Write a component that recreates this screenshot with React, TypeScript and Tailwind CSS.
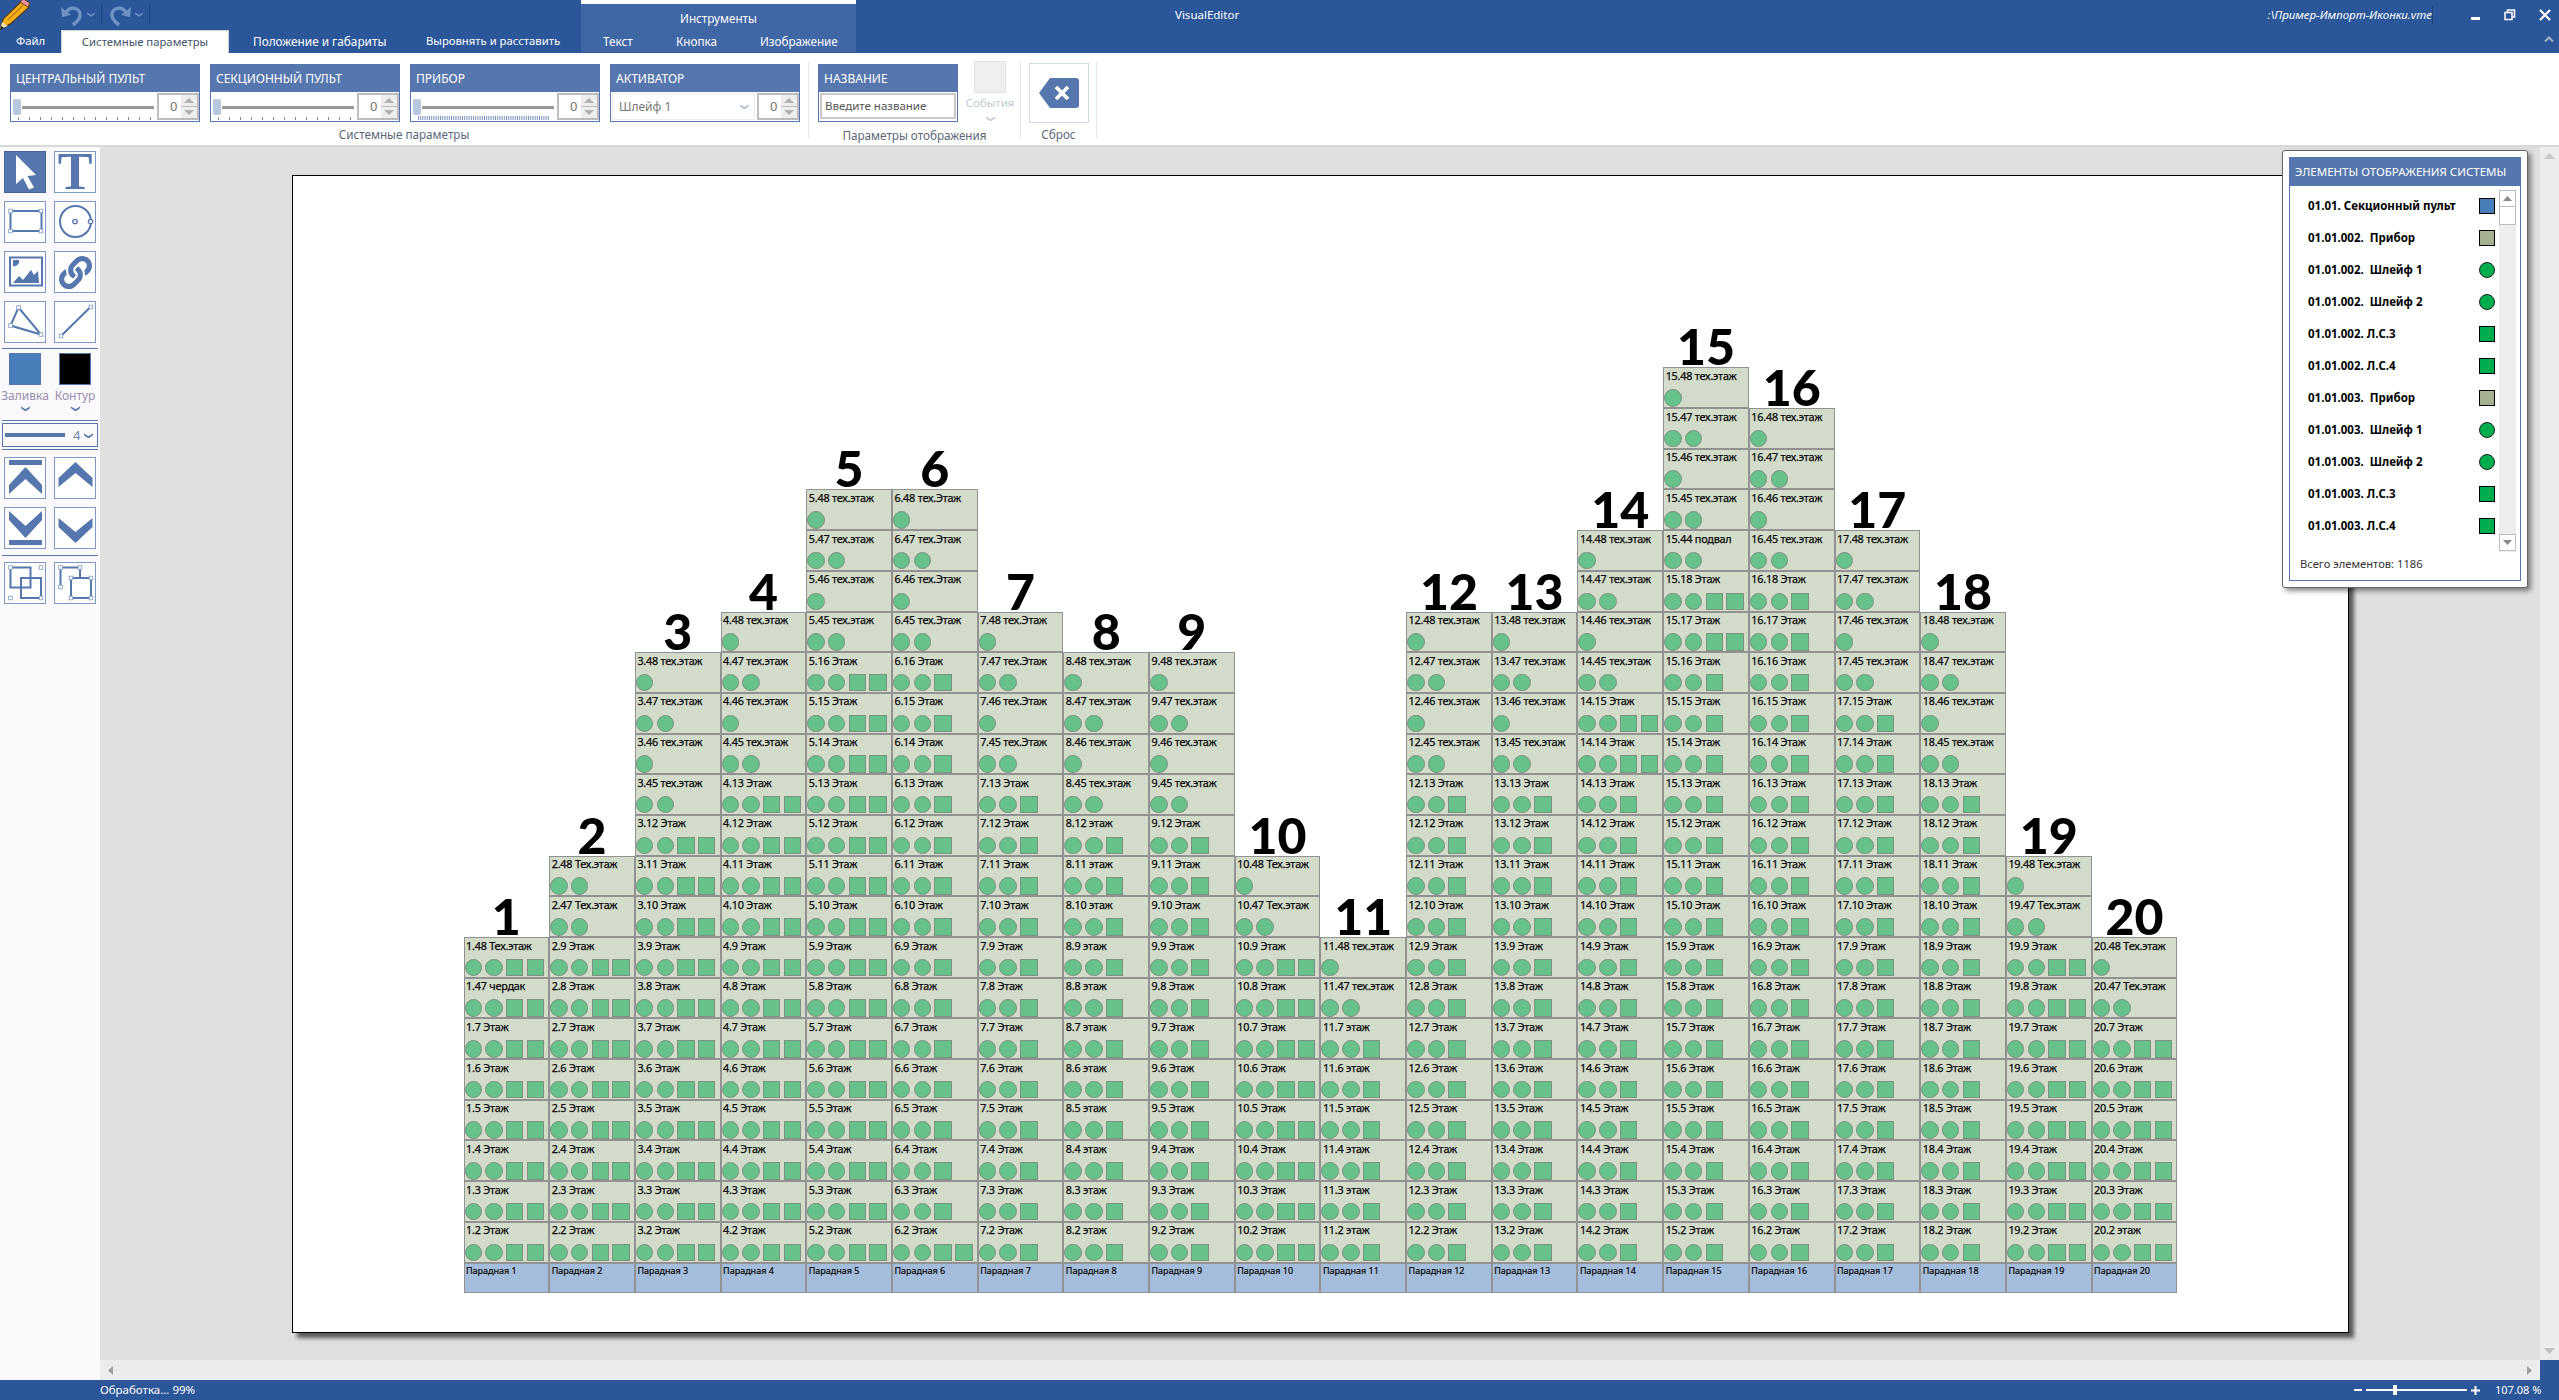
import React from "react";
import { FaLink } from "react-icons/fa";

const BLUE = "#5577ae";

type Row = [string, number];
const seq = (c: number, from: number, to: number, word: string, n: number): Row[] => {
  const out: Row[] = [];
  for (let i = from; i >= to; i--) out.push([`${c}.${i} ${word}`, n]);
  return out;
};
const tech = (c: number, word: string): Row[] => [
  [`${c}.48 ${word}`, 1],
  [`${c}.47 ${word}`, 2],
  [`${c}.46 ${word}`, 1],
  [`${c}.45 ${word}`, 2],
];
const two = (c: number, a: number, b: number): Row[] => [
  [`${c}.48 Тех.этаж`, a],
  [`${c}.47 Тех.этаж`, b],
];

const columns: Row[][] = [
  [["1.48 Тех.этаж", 4], ["1.47 чердак", 4], ...seq(1, 7, 2, "Этаж", 4)],
  [...two(2, 2, 2), ...seq(2, 9, 2, "Этаж", 4)],
  [...tech(3, "тех.этаж"), ...seq(3, 12, 2, "Этаж", 4)],
  [...tech(4, "тех.этаж"), ...seq(4, 13, 2, "Этаж", 4)],
  [...tech(5, "тех.этаж"), ...seq(5, 16, 2, "Этаж", 4)],
  [...tech(6, "тех.Этаж"), ...seq(6, 16, 3, "Этаж", 3), ["6.2 Этаж", 4]],
  [...tech(7, "тех.Этаж"), ...seq(7, 13, 2, "Этаж", 3)],
  [...tech(8, "тех.этаж"), ...seq(8, 12, 2, "этаж", 3)],
  [...tech(9, "тех.этаж"), ...seq(9, 12, 2, "Этаж", 3)],
  [...two(10, 1, 2), ...seq(10, 9, 2, "Этаж", 4)],
  [["11.48 тех.этаж", 1], ["11.47 тех.этаж", 2], ...seq(11, 7, 2, "этаж", 3)],
  [...tech(12, "тех.этаж"), ...seq(12, 13, 2, "Этаж", 3)],
  [...tech(13, "тех.этаж"), ...seq(13, 13, 2, "Этаж", 3)],
  [...tech(14, "тех.этаж"), ...seq(14, 15, 14, "Этаж", 4), ...seq(14, 13, 2, "Этаж", 3)],
  [...tech(15, "тех.этаж"), ["15.44 подвал", 2], ...seq(15, 18, 17, "Этаж", 4), ...seq(15, 16, 2, "Этаж", 3)],
  [...tech(16, "тех.этаж"), ...seq(16, 18, 2, "Этаж", 3)],
  [...tech(17, "тех.этаж"), ...seq(17, 15, 2, "Этаж", 3)],
  [...tech(18, "тех.этаж"), ...seq(18, 13, 2, "Этаж", 3)],
  [...two(19, 1, 2), ...seq(19, 9, 2, "Этаж", 4)],
  [...two(20, 1, 2), ...seq(20, 7, 3, "Этаж", 4), ["20.2 этаж", 4]],
];

const legend: [string, string][] = [
  ["01.01. Секционный пульт", "blue"],
  ["01.01.002.  Прибор", "olive"],
  ["01.01.002.  Шлейф 1", "circle"],
  ["01.01.002.  Шлейф 2", "circle"],
  ["01.01.002. Л.С.3", "square"],
  ["01.01.002. Л.С.4", "square"],
  ["01.01.003.  Прибор", "olive"],
  ["01.01.003.  Шлейф 1", "circle"],
  ["01.01.003.  Шлейф 2", "circle"],
  ["01.01.003. Л.С.3", "square"],
  ["01.01.003. Л.С.4", "square"],
];

function Cell({ label, n }: { label: string; n: number }) {
  return (
    <div className="h-[40.7px] w-[85.7px] border border-[#929292] bg-[#d3dbca] flex flex-col justify-between overflow-hidden">
      <div className="pl-[1.5px] pt-[0.5px] text-[10.8px] leading-[13px] text-black whitespace-nowrap tracking-[-0.2px] [-webkit-text-stroke:0.25px_#111]">{label}</div>
      <div className="flex gap-[3.2px] pb-[0.5px] h-[18px]">
        {[0, 1, 2, 3].slice(0, n).map((i) =>
          i < 2 ? (
            <div key={i} className="w-[17.5px] h-[17.5px] shrink-0 rounded-full bg-[#66c28a] border-[1.5px] border-[#7f9180]" />
          ) : (
            <div key={i} className="w-[17.5px] h-[17.5px] shrink-0 bg-[#66c28a] border-[1.5px] border-[#7f9180]" />
          )
        )}
      </div>
    </div>
  );
}

function Column({ num, rows }: { num: number; rows: Row[] }) {
  return (
    <div className="flex flex-col items-center w-[85.7px]">
      <div className="h-[38px] text-[50px] leading-[35px] font-black text-black whitespace-nowrap" style={{ fontFamily: "Lato, sans-serif" }}>
        {num}
      </div>
      {rows.map(([l, n]) => (
        <Cell key={l} label={l} n={n} />
      ))}
      <div className="h-[30px] w-[85.7px] border border-[#929292] bg-[#a5bddc] pl-[1.5px] pt-[1px] text-[9px] leading-[12px] text-black whitespace-nowrap overflow-hidden [-webkit-text-stroke:0.2px_#111]">
        Парадная {num}
      </div>
    </div>
  );
}

function Ticks({ dense }: { dense?: boolean }) {
  const xs: number[] = [];
  if (dense) for (let x = 0; x <= 131; x += 2.2) xs.push(x);
  else for (let x = 0; x <= 132; x += 11) xs.push(x);
  return (
    <svg width="134" height="5" className="block">
      {xs.map((x) => (
        <line key={x} x1={x + 0.5} x2={x + 0.5} y1={dense ? 0 : 1} y2={4} stroke={dense ? "#5577ae" : "#6f7f99"} strokeWidth="1" opacity={dense ? 0.8 : 0.9} />
      ))}
    </svg>
  );
}

function Spin() {
  return (
    <div className="w-[42px] h-[27px] flex border-2 border-[#bdbdbd] bg-white shrink-0">
      <div className="flex-1 text-right pr-[3px] text-[13px] leading-[23px] text-[#777]">0</div>
      <div className="w-[16px] flex flex-col bg-[#ededed]">
        <div className="flex-1 flex items-center justify-center border-b border-[#bdbdbd]">
          <svg width="10" height="5"><path d="M0 5 L5 0 L10 5Z" fill="#b0b0b0" /></svg>
        </div>
        <div className="flex-1 flex items-center justify-center">
          <svg width="10" height="5"><path d="M0 0 L5 5 L10 0Z" fill="#b0b0b0" /></svg>
        </div>
      </div>
    </div>
  );
}

function PanelTitle({ children }: { children: React.ReactNode }) {
  return <div className="h-[28px] bg-[#5577ae] text-white text-[12px] leading-[29px] pl-[6px] whitespace-nowrap">{children}</div>;
}

function Panel({ title, dense }: { title: string; dense?: boolean }) {
  return (
    <div className="w-[190px] h-[58px] flex flex-col">
      <PanelTitle>{title}</PanelTitle>
      <div className="flex-1 border-x-[1.5px] border-b-[1.5px] border-[#5577ae] flex items-start pr-[0.5px] pl-[2px] bg-white">
        <div className="flex-1 flex flex-col">
          <div className="flex items-center h-[16px] mt-[7px]">
            <div className="w-[7.5px] h-[16px] rounded-[2px] bg-[#b8c8de]" />
            <div className="w-[132px] h-[3px] bg-[#9a9a9a] ml-[1px]" />
          </div>
          <div className="pl-[5px] mt-[1px]"><Ticks dense={dense} /></div>
        </div>
        <div className="mt-[1px]"><Spin /></div>
      </div>
    </div>
  );
}

function Btn({ children, active }: { children: React.ReactNode; active?: boolean }) {
  return (
    <div className={`w-[42px] h-[42px] flex items-center justify-center border ${active ? "border-[#44659c] bg-[#5577ae]" : "border-[#7d9ac6] bg-white"}`}>
      {children}
    </div>
  );
}

function Handle({ x, y }: { x: number; y: number }) {
  return <rect x={x - 1.8} y={y - 1.8} width="3.6" height="3.6" fill="#fff" stroke="#7d9ac6" strokeWidth="0.8" />;
}

const ToolRow = ({ children, mt = "mt-[8px]" }: { children: React.ReactNode; mt?: string }) => (
  <div className={`flex gap-[8px] pl-[4px] ${mt}`}>{children}</div>
);

const Divider = ({ mt }: { mt: string }) => <div className={`h-[1px] bg-[#5577ae] mx-[2px] ${mt}`} />;

const Chev = ({ color = "#5577ae", w = 9 }: { color?: string; w?: number }) => (
  <svg width={w} height={w * 0.6} viewBox="0 0 10 6"><path d="M0 0.5 L5 3.5 L10 0.5 L10 2.5 L5 6 L0 2.5Z" fill={color} /></svg>
);

function Toolbar() {
  return (
    <div className="w-[100px] shrink-0 bg-[#fbf9fc] flex flex-col">
      <ToolRow mt="mt-[4px]">
        <Btn active>
          <svg width="42" height="42"><path d="M11 4 L31 24 L22.5 25 L29 36.5 L24 38.5 L18 27 L11 33Z" fill="#fff" /></svg>
        </Btn>
        <Btn>
          <span className="text-[52px] leading-[42px] font-bold text-[#5577ae]" style={{ fontFamily: "'Liberation Serif', serif" }}>T</span>
        </Btn>
      </ToolRow>
      <ToolRow>
        <Btn>
          <svg width="42" height="42">
            <rect x="5.5" y="10" width="31" height="20" fill="none" stroke={BLUE} strokeWidth="2" />
            <Handle x={5.5} y={10} /><Handle x={36} y={10} /><Handle x={5.5} y={30} /><Handle x={36} y={30} />
          </svg>
        </Btn>
        <Btn>
          <svg width="42" height="42">
            <circle cx="20.5" cy="20.5" r="15.5" fill="none" stroke={BLUE} strokeWidth="2" />
            <circle cx="20" cy="20.5" r="2.2" fill="#fff" stroke={BLUE} strokeWidth="1.3" />
            <circle cx="35.5" cy="20.5" r="2.2" fill="#fff" stroke={BLUE} strokeWidth="1.2" />
          </svg>
        </Btn>
      </ToolRow>
      <ToolRow>
        <Btn>
          <svg width="42" height="42">
            <rect x="5" y="6.5" width="32" height="28" fill="none" stroke={BLUE} strokeWidth="2" />
            <path d="M8 9 L14 9 A5 5 0 0 1 8 15Z" fill={BLUE} />
            <path d="M8 32 L14 25 L18 29 L26 19 L29 24 L33 20 L34 32Z" fill={BLUE} />
          </svg>
        </Btn>
        <Btn><FaLink size={33} color={BLUE} /></Btn>
      </ToolRow>
      <ToolRow>
        <Btn>
          <svg width="42" height="42">
            <path d="M13.5 6.5 L36 33.5 L5.5 24.5Z" fill="none" stroke={BLUE} strokeWidth="2" />
            <Handle x={13.5} y={6.5} /><Handle x={36} y={33.5} /><Handle x={5.5} y={24.5} />
          </svg>
        </Btn>
        <Btn>
          <svg width="42" height="42">
            <line x1="6" y1="35" x2="35.5" y2="6" stroke={BLUE} strokeWidth="2" />
            <Handle x={6} y={35} /><Handle x={36} y={6} />
          </svg>
        </Btn>
      </ToolRow>
      <Divider mt="mt-[5px]" />
      <div className="flex mt-[4px] text-center">
        {[["Заливка", "bg-[#4a7ebb]"], ["Контур", "bg-black"]].map(([t, c]) => (
          <div key={t} className="w-[50px] flex flex-col items-center text-[12px] leading-[16px] text-[#9a8fb0]">
            <div className={`w-[32px] h-[32px] ${c} border-[1.5px] border-[#5577ae]`} />
            <div className="mt-[3px]">{t}</div>
            <div className="mt-[2px]"><Chev /></div>
          </div>
        ))}
      </div>
      <Divider mt="mt-[9px]" />
      <div className="mx-[2px] mt-[2px] h-[24px] border border-[#5577ae] flex items-center pl-[2px]">
        <div className="w-[60px] h-[4px] bg-[#5577ae]" />
        <div className="ml-[8px] text-[13px] text-[#6f85ad] leading-[20px]">4</div>
        <div className="ml-[4px]"><Chev /></div>
      </div>
      <Divider mt="mt-[2px]" />
      <ToolRow mt="mt-[7px]">
        <Btn><svg width="42" height="42"><rect x="4" y="3" width="33" height="5" fill={BLUE} /><path d="M4 28 L20.5 10 L37 28 L37 37 L20.5 22 L4 37Z" fill={BLUE} /></svg></Btn>
        <Btn><svg width="42" height="42"><path d="M3.5 21 L20.5 5 L37.5 21 L37.5 30 L20.5 16 L3.5 30Z" fill={BLUE} /></svg></Btn>
      </ToolRow>
      <ToolRow>
        <Btn><svg width="42" height="42"><rect x="4" y="33" width="33" height="5" fill={BLUE} /><path d="M4 4 L20.5 19 L37 4 L37 13 L20.5 31 L4 13Z" fill={BLUE} /></svg></Btn>
        <Btn><svg width="42" height="42"><path d="M3.5 11 L20.5 25 L37.5 11 L37.5 20 L20.5 36 L3.5 20Z" fill={BLUE} /></svg></Btn>
      </ToolRow>
      <Divider mt="mt-[6px]" />
      <ToolRow mt="mt-[6px]">
        <Btn>
          <svg width="42" height="42">
            <rect x="5.5" y="5.5" width="20" height="20" fill="none" stroke={BLUE} strokeWidth="2" />
            <rect x="16" y="16" width="20" height="20" fill="none" stroke={BLUE} strokeWidth="2" />
            <Handle x={5.5} y={5.5} /><Handle x={36} y={5.5} /><Handle x={5.5} y={36} /><Handle x={36} y={36} />
          </svg>
        </Btn>
        <Btn>
          <svg width="42" height="42">
            <path d="M5.5 25 L5.5 5.5 L25 5.5 L25 16" fill="none" stroke={BLUE} strokeWidth="2" />
            <rect x="16" y="16" width="20" height="20" fill="#fff" stroke={BLUE} strokeWidth="2" />
            <Handle x={5.5} y={5.5} /><Handle x={25} y={5.5} /><Handle x={5.5} y={25} /><Handle x={16} y={16} /><Handle x={36} y={16} /><Handle x={16} y={36} /><Handle x={36} y={36} />
          </svg>
        </Btn>
      </ToolRow>
    </div>
  );
}

function LegendIcon({ kind }: { kind: string }) {
  if (kind === "circle") return <div className="w-[16px] h-[16px] rounded-full bg-[#00ad4e] border border-[#222]" />;
  const bg = kind === "blue" ? "bg-[#4a7ebb]" : kind === "olive" ? "bg-[#a5b191]" : "bg-[#00ad4e]";
  return <div className={`w-[16px] h-[16px] ${bg} border border-black`} />;
}

function LegendPanel() {
  return (
    <div className="absolute top-[3px] right-[31px] w-[246px] h-[438px] bg-white border border-[#666] rounded-[3px] p-[6px] shadow-[3px_3px_5px_rgba(0,0,0,0.45)]">
      <div className="h-full border border-[#5577ae] flex flex-col">
        <div className="h-[28px] shrink-0 bg-[#5577ae] text-white text-[11.5px] leading-[28px] pl-[5px] whitespace-nowrap">ЭЛЕМЕНТЫ ОТОБРАЖЕНИЯ СИСТЕМЫ</div>
        <div className="flex pt-[4px] h-[366px] shrink-0">
          <div className="w-[209px] pl-[18px] pr-[4px] flex flex-col">
            {legend.map(([t, k], i) => (
              <div key={i} className="h-[32px] flex items-center justify-between shrink-0">
                <span className="text-[11.5px] font-bold text-black whitespace-pre">{t}</span>
                <LegendIcon kind={k} />
              </div>
            ))}
          </div>
          <div className="w-[17px] bg-[#ededed] flex flex-col justify-between">
            <div className="flex flex-col">
              <div className="h-[17px] bg-white border-[1.5px] border-[#bdbdbd] flex items-center justify-center">
                <svg width="9" height="5"><path d="M0 5 L4.5 0 L9 5Z" fill="#888" /></svg>
              </div>
              <div className="h-[18px] bg-white border-x-[1.5px] border-b-[1.5px] border-[#bdbdbd]" />
            </div>
            <div className="h-[17px] bg-white border-[1.5px] border-[#bdbdbd] flex items-center justify-center mb-[1px]">
              <svg width="9" height="5"><path d="M0 0 L4.5 5 L9 0Z" fill="#888" /></svg>
            </div>
          </div>
        </div>
        <div className="flex-1 flex items-center pl-[10px] pb-[4px] text-[11.2px] text-[#333]">Всего элементов: 1186</div>
      </div>
    </div>
  );
}

function Header() {
  return (
    <div className="h-[53px] bg-[#2b579a] flex text-white shrink-0">
      <div className="w-[581px] flex flex-col shrink-0">
        <div className="h-[30px] flex items-center">
          <svg width="30" height="30" viewBox="0 0 27 30" preserveAspectRatio="none" className="shrink-0">
            <path d="M0 29 L3 19 L19 2 L26 7 L9 24Z" fill="#f6b21b" stroke="#5c3a08" strokeWidth="1" />
            <path d="M18 2 L21 -1 L27 3 L25 7Z" fill="#ef8fa5" stroke="#5c3a08" strokeWidth="0.8" />
            <path d="M0 29 L2 22 L7 26Z" fill="#f4dcb0" />
            <path d="M0 30 L1 26 L3.5 28Z" fill="#222" />
            <line x1="7" y1="20" x2="21" y2="5" stroke="#c97f0a" strokeWidth="1.5" />
          </svg>
          <div className="flex items-center ml-[30px] mt-[-1px]">
            <svg width="24" height="22" viewBox="0 0 24 22" fill="none"><path d="M6 9 C9 2 20 3 20 11 C20 15 17 18 13 21" stroke="#6f92c5" strokeWidth="3.5" /><path d="M1 3 L2 13 L11 11Z" fill="#6f92c5" /></svg>
            <div className="ml-[3px] mr-[6px]"><Chev color="#6f92c5" w={8} /></div>
            <div className="w-[1px] h-[20px] bg-[#1d4279]" />
            <svg width="24" height="22" viewBox="0 0 24 22" fill="none" className="ml-[6px]"><path d="M18 9 C15 2 4 3 4 11 C4 15 7 18 11 21" stroke="#6f92c5" strokeWidth="3.5" /><path d="M23 3 L22 13 L13 11Z" fill="#6f92c5" /></svg>
            <div className="ml-[3px] mr-[6px]"><Chev color="#6f92c5" w={8} /></div>
            <div className="w-[1px] h-[20px] bg-[#1d4279]" />
          </div>
        </div>
        <div className="h-[23px] flex items-center text-[11.3px]">
          <span className="ml-[16px] w-[45px]">Файл</span>
          <span className="w-[168px] h-[23px] bg-white border-t border-x border-[#d0d0d0] text-[#44546a] text-center leading-[22px] whitespace-nowrap">Системные параметры</span>
          <span className="ml-[24px] w-[173px] whitespace-nowrap text-[11.8px]">Положение и габариты</span>
          <span className="whitespace-nowrap">Выровнять и расставить</span>
        </div>
      </div>
      <div className="w-[275px] shrink-0 flex flex-col">
        <div className="h-[4px] bg-white" />
        <div className="h-[26px] bg-[#3f66a5] text-center text-[11.7px] leading-[28px]">Инструменты</div>
        <div className="h-[22px] bg-[#3f66a5] flex text-[11.7px] leading-[22px] pl-[22px]">
          <span className="w-[73px]">Текст</span>
          <span className="w-[84px]">Кнопка</span>
          <span>Изображение</span>
        </div>
      </div>
      <div className="flex-1 flex flex-col">
        <div className="h-[30px] flex items-center text-[11.5px]">
          <span className="ml-[319px] w-[64px] whitespace-nowrap">VisualEditor</span>
          <span className="ml-[1024px] w-[170px] italic whitespace-nowrap border-r border-[#1d4279] text-right">:\Пример-Импорт-Иконки.vme</span>
          <div className="ml-[38px] w-[9px] h-[3px] mt-[6px] bg-white" />
          <svg width="12" height="12" className="ml-[24px]" fill="none" stroke="#fff" strokeWidth="1.5"><rect x="1" y="3.5" width="7" height="7" /><path d="M3.5 3 V1 H10.5 V8 H8.5" /></svg>
          <svg width="12" height="12" className="ml-[23px]" stroke="#fff" strokeWidth="2.2"><path d="M1 1 L11 11 M11 1 L1 11" /></svg>
        </div>
        <div className="flex-1 flex justify-end pr-[5px] pt-[6px]">
          <svg width="10" height="6"><path d="M0 5 L5 0 L10 5 L8 6 L5 3 L2 6Z" fill="#9fb0c9" /></svg>
        </div>
      </div>
    </div>
  );
}

const GroupLabel = ({ children }: { children: React.ReactNode }) => (
  <div className="text-[11.7px] leading-[16px] text-[#5b6678] text-center whitespace-nowrap mt-auto">{children}</div>
);
const RibbonSep = () => <div className="w-[1px] h-[76px] mt-[9px] bg-[#e4e4e4] shrink-0" />;

function Ribbon() {
  return (
    <div className="h-[94px] bg-white border-b-2 border-[#d8d8d8] flex shrink-0 text-[#333]">
      <div className="w-[808px] shrink-0 flex flex-col h-[89px]">
        <div className="flex gap-[10px] pl-[10px] pt-[11px]">
          <Panel title="ЦЕНТРАЛЬНЫЙ ПУЛЬТ" />
          <Panel title="СЕКЦИОННЫЙ ПУЛЬТ" />
          <Panel title="ПРИБОР" dense />
          <div className="w-[190px] h-[58px] flex flex-col">
            <PanelTitle>АКТИВАТОР</PanelTitle>
            <div className="flex-1 border-x-[1.5px] border-b-[1.5px] border-[#5577ae] flex items-start pl-[1px] pr-[0.5px] gap-[2px] pt-[1px]">
              <div className="flex-1 h-[27px] border border-[#ececec] flex items-center justify-between pl-[6px] pr-[5px] text-[12px] text-[#777]">
                <span>Шлейф 1</span>
                <Chev color="#a9b8d0" />
              </div>
              <Spin />
            </div>
          </div>
        </div>
        <GroupLabel>Системные параметры</GroupLabel>
      </div>
      <RibbonSep />
      <div className="w-[211px] shrink-0 flex flex-col h-[89px]">
        <div className="flex pl-[9px] pt-[8px]">
          <div className="w-[140px] mt-[3px] h-[58px] flex flex-col">
            <PanelTitle>НАЗВАНИЕ</PanelTitle>
            <div className="flex-1 border-x-[1.5px] border-b-[1.5px] border-[#5577ae] p-[1px]">
              <div className="h-[26px] border-2 border-[#c9c9c9] pl-[3px] text-[11.5px] leading-[22px] text-[#555] whitespace-nowrap">Введите название</div>
            </div>
          </div>
          <div className="ml-[16px] w-[32px] h-[66px] flex flex-col items-center">
            <div className="w-[32px] h-[32px] shrink-0 bg-[#efefef] border border-[#e2e2e2]" />
            <div className="mt-[1px] text-[11.5px] leading-[18px] text-[#c3cad6]">События</div>
            <div className="mt-[4px]"><Chev color="#c0cad9" /></div>
          </div>
        </div>
        <GroupLabel>Параметры отображения</GroupLabel>
      </div>
      <RibbonSep />
      <div className="w-[75px] shrink-0 flex flex-col items-center h-[89px]">
        <div className="mt-[10px] w-[60px] h-[60px] border border-[#cfd9e8] flex items-center justify-center">
          <svg width="40" height="30" viewBox="0 0 40 30">
            <path d="M11 0 H37 Q40 0 40 3 V27 Q40 30 37 30 H11 L0 15Z" fill={BLUE} />
            <path d="M17 9 L29 21 M29 9 L17 21" stroke="#fff" strokeWidth="3.8" />
          </svg>
        </div>
        <GroupLabel>Сброс</GroupLabel>
      </div>
      <RibbonSep />
    </div>
  );
}

export default function App() {
  return (
    <div className="w-[2559px] h-[1400px] overflow-hidden flex flex-col bg-white" style={{ fontFamily: "'Noto Sans', sans-serif" }}>
      <Header />
      <Ribbon />
      <div className="flex-1 flex min-h-0">
        <Toolbar />
        <div className="flex-1 flex flex-col min-w-0">
          <div className="flex-1 flex min-h-0 relative">
            <div className="flex-1 bg-[#dfdfdf] pl-[192px] pt-[28px] min-w-0">
              <div className="w-[2057px] h-[1158px] bg-white border-[1.5px] border-black shadow-[5px_5px_4px_rgba(0,0,0,0.6)] flex items-end pl-[170.5px] pb-[39.5px]">
                {columns.map((rows, i) => (
                  <Column key={i} num={i + 1} rows={rows} />
                ))}
              </div>
            </div>
            <div className="w-[19px] bg-[#ececec] flex flex-col justify-between items-center py-[6px]">
              <svg width="11" height="6"><path d="M0 6 L5.5 0 L11 6Z" fill="#c8c8c8" /></svg>
              <svg width="11" height="6"><path d="M0 0 L5.5 6 L11 0Z" fill="#c0c0c0" /></svg>
            </div>
            <LegendPanel />
          </div>
          <div className="h-[20px] flex shrink-0">
            <div className="flex-1 bg-[#ececec] flex justify-between items-center pl-[8px] pr-[8px]">
              <svg width="5" height="9"><path d="M5 0 L0 4.5 L5 9Z" fill="#a0a0a0" /></svg>
              <svg width="5" height="9"><path d="M0 0 L5 4.5 L0 9Z" fill="#a0a0a0" /></svg>
            </div>
            <div className="w-[19px] bg-[#2b579a]" />
          </div>
        </div>
      </div>
      <div className="h-[20px] bg-[#2b579a] text-white flex items-center shrink-0">
        <span className="ml-[100px] text-[11.5px]">Обработка... 99%</span>
        <div className="ml-auto flex items-center">
          <div className="w-[8px] h-[2px] bg-white" />
          <div className="ml-[4px] w-[101px] h-[2px] bg-white relative">
            <div className="absolute left-[27px] top-[-4px] w-[4px] h-[10px] bg-white" />
          </div>
          <svg width="9" height="9" className="ml-[4px]" stroke="#fff" strokeWidth="2"><path d="M0 4.5 H9 M4.5 0 V9" /></svg>
          <span className="ml-[15px] mr-[17px] w-[47px] text-[11px] whitespace-nowrap">107.08 %</span>
        </div>
      </div>
    </div>
  );
}
